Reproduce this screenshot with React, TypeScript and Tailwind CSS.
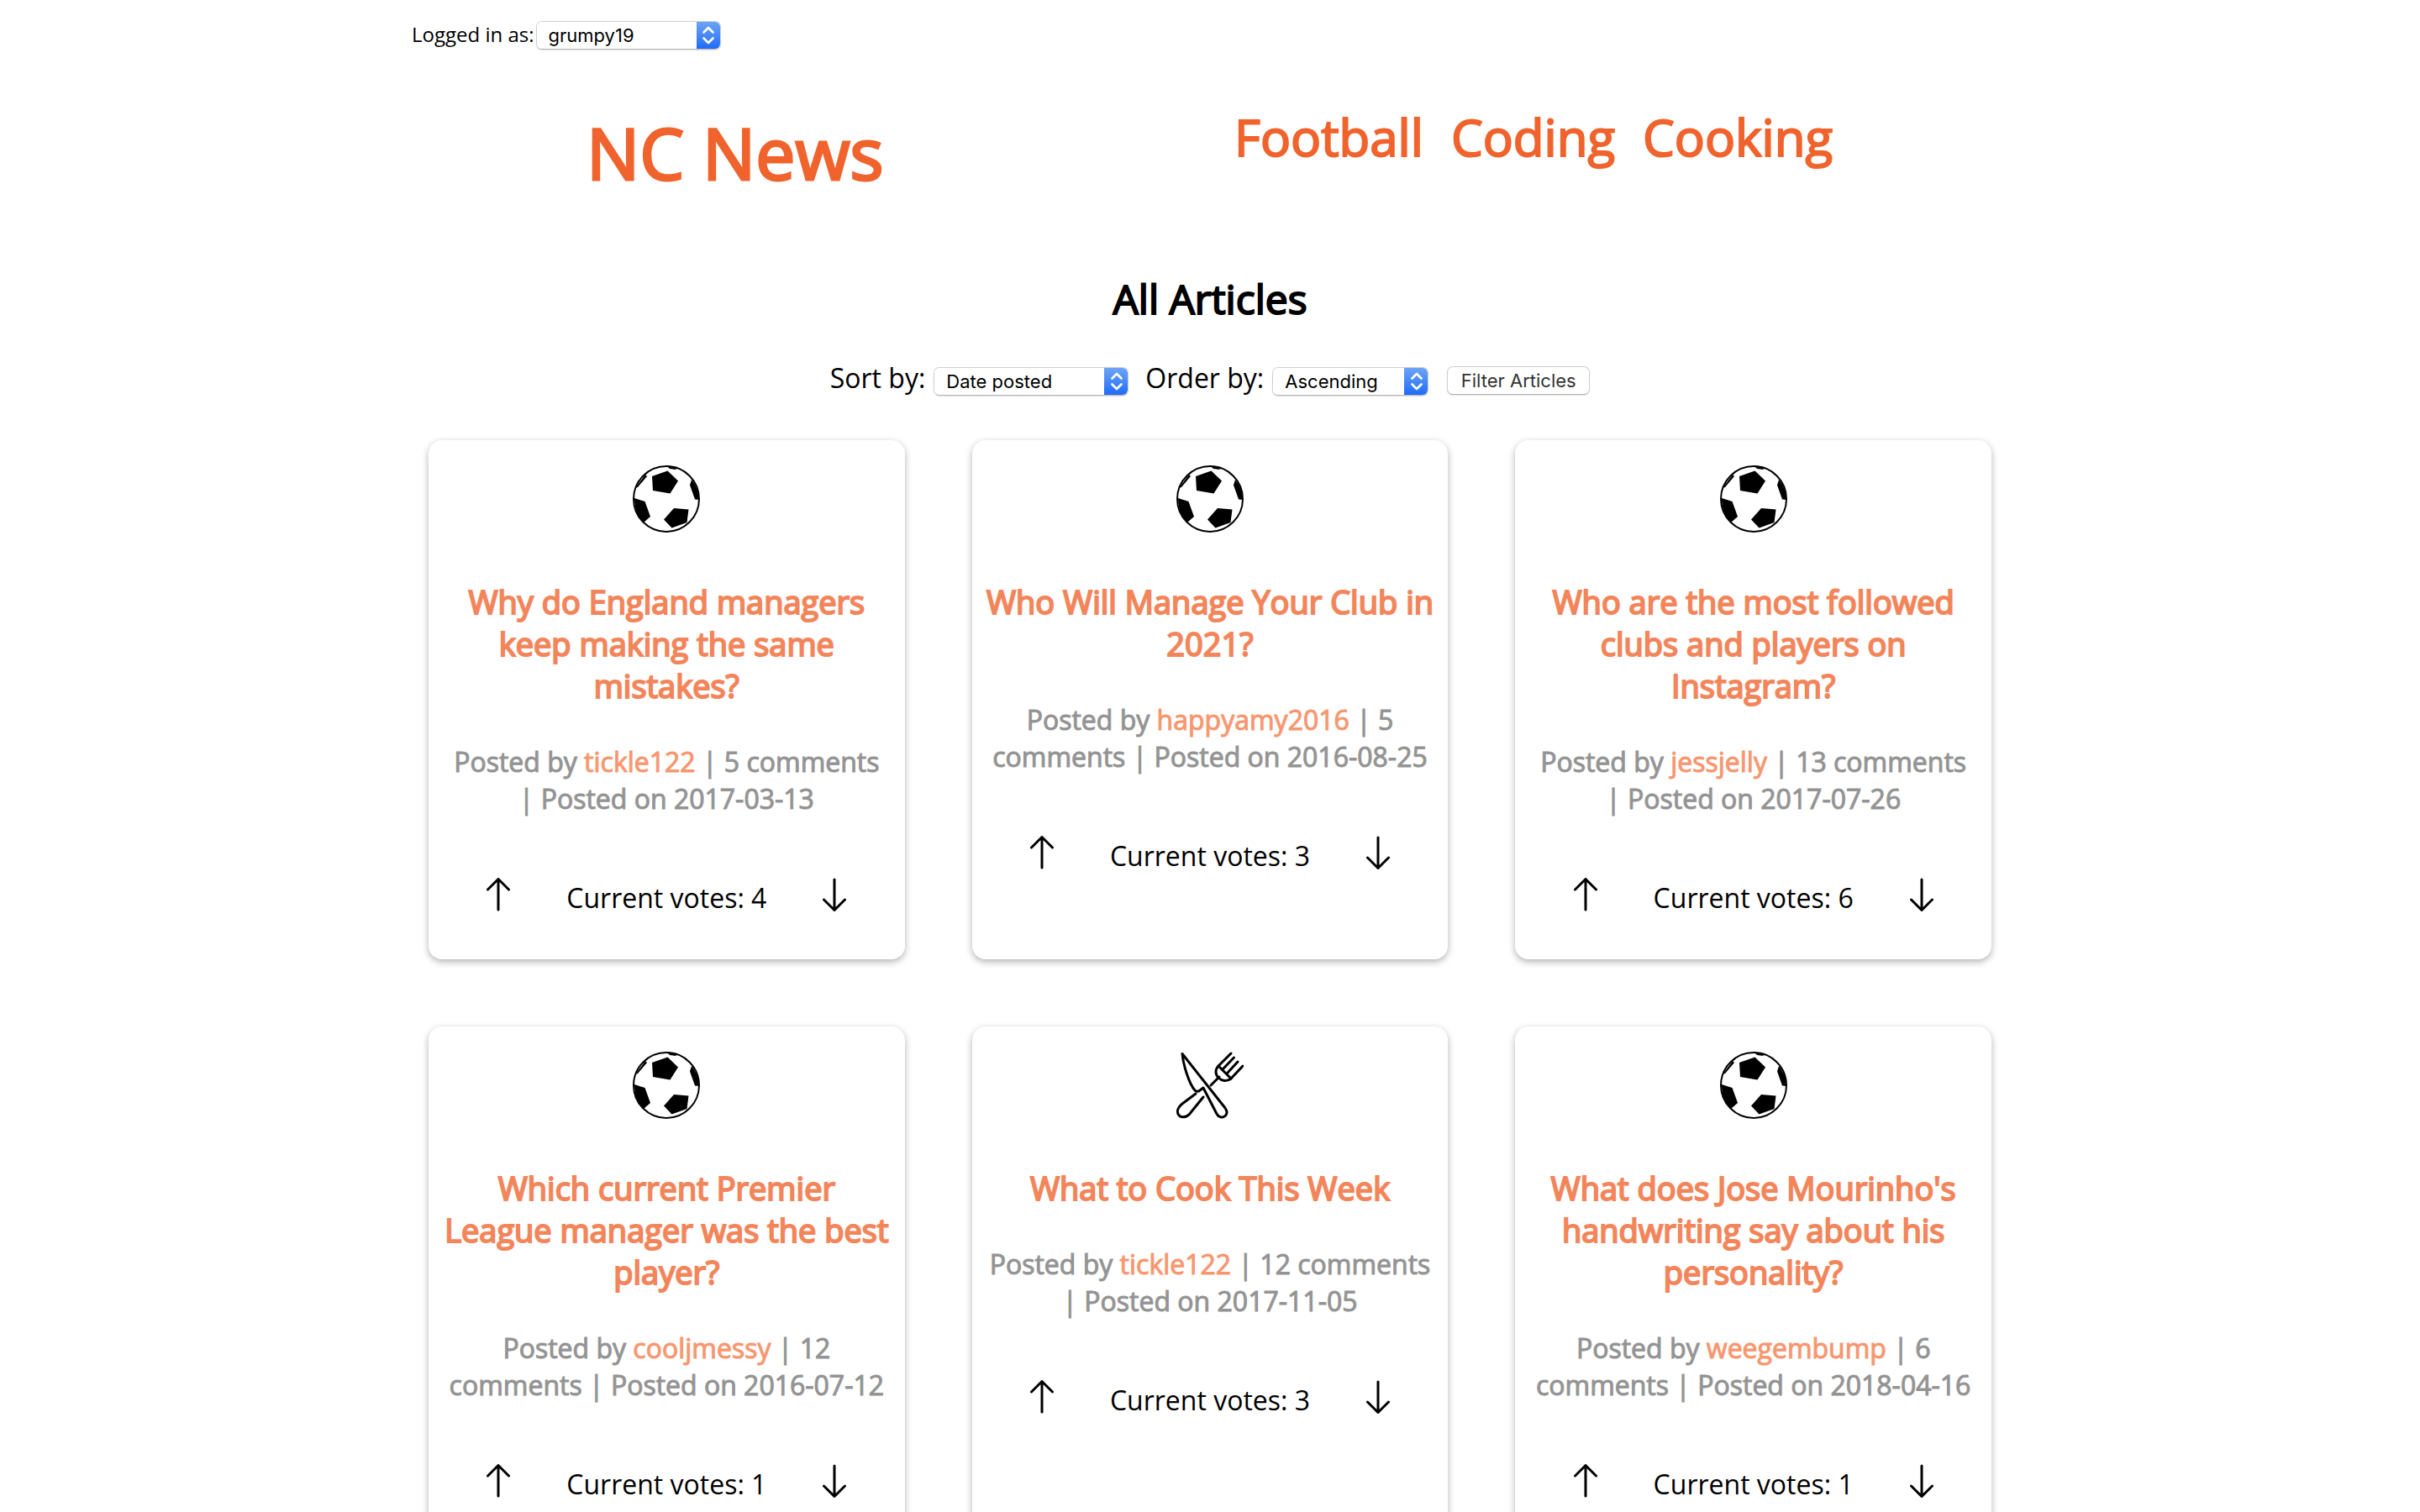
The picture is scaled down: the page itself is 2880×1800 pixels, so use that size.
import React, { useId } from "react";

type Topic = "football" | "cooking";

type Article = {
  title: string;
  topic: Topic;
  author: string;
  comments: number;
  date: string;
  votes: number;
};

const articles: Article[] = [
  { title: "Why do England managers keep making the same mistakes?", topic: "football", author: "tickle122", comments: 5, date: "2017-03-13", votes: 4 },
  { title: "Who Will Manage Your Club in 2021?", topic: "football", author: "happyamy2016", comments: 5, date: "2016-08-25", votes: 3 },
  { title: "Who are the most followed clubs and players on Instagram?", topic: "football", author: "jessjelly", comments: 13, date: "2017-07-26", votes: 6 },
  { title: "Which current Premier League manager was the best player?", topic: "football", author: "cooljmessy", comments: 12, date: "2016-07-12", votes: 1 },
  { title: "What to Cook This Week", topic: "cooking", author: "tickle122", comments: 12, date: "2017-11-05", votes: 3 },
  { title: "What does Jose Mourinho's handwriting say about his personality?", topic: "football", author: "weegembump", comments: 6, date: "2018-04-16", votes: 1 },
];

function FootballIcon() {
  return (
    <svg viewBox="0 0 80 80" className="size-20" aria-hidden="true">
      <circle cx="40" cy="40" r="39" fill="#fff" stroke="#000" strokeWidth="2" />
      <path d="M23 13 41.500 6.500 54 18.500 44.500 33.500 24 30Z" />
      <path d="M49 51 66.500 52.500 64.500 68 46.500 74.500 37 64.500Z" />
      <path d="M2 39 14.500 43 21 61 13 68C6 61 2 53 2 39Z" />
      <path d="M70 17C75 23 79 32 79 41L74 40.500 68 23.500Z" />
      <path d="M3 27 15 11 17 13 6 26Z" />
      <path d="M40 0 54 2 51 5 44 4Z" />
    </svg>
  );
}

function CutleryIcon() {
  return (
    <svg viewBox="0 0 80 80" className="size-20" fill="none" stroke="#000" strokeWidth="3" strokeLinecap="round" strokeLinejoin="round" aria-hidden="true">
      <path d="M7 2.500C8 15 15 38 22 46Q25 48.500 28 46L32 43 48 74C50 78 55 79.500 58 76.500 61 74 60 70 58 67L7 2.500Z" />
      <path d="M23 50 7 62C2 66 0 71 2.500 75 5 79 11 78.500 15 75L32 54" />
      <path d="M41 40 51 30" />
      <path d="M65 2 50 17C46 21 46 27 50 31 54 35 60 36 65 32L79 17" />
      <path d="M68.500 7 56 20M73 12 61 25M50 17 65 32" />
    </svg>
  );
}

function Arrow({ down = false }: { down?: boolean }) {
  return (
    <svg viewBox="0 0 28 40" className="h-10 w-7" fill="none" stroke="#000" strokeWidth="3" strokeLinecap="round" strokeLinejoin="round" aria-hidden="true">
      <path d={down ? "M14 2V38M1.500 26 14 38.500 26.500 26" : "M14 38V2M1.500 14 14 1.500 26.500 14"} />
    </svg>
  );
}

function SelectBox({ id, value, options, width }: { id: string; value: string; options: string[]; width: string }) {
  return (
    <div className={`relative flex h-[34px] overflow-hidden rounded-[7px] border border-[#cfcfcf] border-b-[#b5b5b5] shadow-[0_1px_1px_rgba(0,0,0,0.12)] ${width}`}>
      <select
        id={id}
        defaultValue={value}
        className="w-full appearance-none bg-white pl-3.5 font-['Inter','Liberation_Sans',sans-serif] text-[22px] leading-8 text-black outline-none"
      >
        {options.map((option) => (
          <option key={option}>{option}</option>
        ))}
      </select>
      <span className="pointer-events-none absolute -inset-y-px -right-px flex w-[29px] items-center justify-center bg-linear-to-b from-[#6fa5f6] to-[#1a69f8]">
        <svg viewBox="0 0 14 22" className="h-[22px] w-3.5" fill="none" stroke="#fff" strokeWidth="2.600" strokeLinecap="round" strokeLinejoin="round" aria-hidden="true">
          <path d="M1.500 7.500 7 2 12.500 7.500M1.500 14.500 7 20 12.500 14.500" />
        </svg>
      </span>
    </div>
  );
}

function ArticleCard({ article }: { article: Article }) {
  return (
    <article className="flex flex-col items-center rounded-2xl bg-white px-4 pt-[30px] pb-[51px] text-center shadow-[0_3px_8px_rgba(0,0,0,0.3)]">
      {article.topic === "football" ? <FootballIcon /> : <CutleryIcon />}
      <h3 className="mt-[57px] text-[38px] leading-[50px] text-[#f3855b] [-webkit-text-stroke:2px_#f3855b]">
        <a href="#article">{article.title}</a>
      </h3>
      <h4 className="mt-11 px-1 text-[32px] leading-[44px] text-[#949494] [-webkit-text-stroke:1px_#949494]">
        Posted by{" "}
        <a href="#author" className="text-[#f79770] [-webkit-text-stroke:1px_#f79770]">
          {article.author}
        </a>
        {` | ${article.comments} comments | Posted on ${article.date}`}
      </h4>
      <div className="mt-[72px] flex w-[428px] items-start justify-between">
        <button type="button" aria-label="Vote up" className="flex">
          <Arrow />
        </button>
        <p className="mt-0.5 text-[32px] leading-[44px] text-black">{`Current votes: ${article.votes}`}</p>
        <button type="button" aria-label="Vote down" className="flex">
          <Arrow down />
        </button>
      </div>
    </article>
  );
}

export default function App() {
  const userId = useId();
  const sortId = useId();
  const orderId = useId();

  return (
    <div className="min-h-screen bg-white font-['Open_Sans','Noto_Sans',sans-serif] text-black">
      <div className="mx-auto w-2/3">
        <div className="flex items-start pt-[25px] pl-2.5">
          <label htmlFor={userId} className="text-2xl leading-8">
            Logged in as:
          </label>
          <SelectBox id={userId} value="grumpy19" options={["grumpy19", "tickle122", "jessjelly"]} width="ml-0.5 w-[220px]" />
        </div>

        <header className="grid grid-cols-2 text-[#f0632d]">
          <h1 className="mt-[66px] ml-[218px] text-[84px] leading-[114px] [-webkit-text-stroke:3px_#f0632d]">
            <a href="#home">NC News</a>
          </h1>
          <nav className="mt-[63px] ml-[29px] flex gap-[33px] text-[60px] leading-[82px] [-webkit-text-stroke:2px_#f0632d]">
            <a href="#football">Football</a>
            <a href="#coding">Coding</a>
            <a href="#cooking">Cooking</a>
          </nav>
        </header>

        <main>
          <h2 className="mt-[84px] text-center text-5xl leading-[66px] [-webkit-text-stroke:2px_#000]">All Articles</h2>

          <form className="mt-[39px] flex items-center justify-center text-[32px] leading-[44px]" onSubmit={(event) => event.preventDefault()}>
            <label htmlFor={sortId}>Sort by:</label>
            <SelectBox id={sortId} value="Date posted" options={["Date posted", "Comments", "Votes"]} width="ml-2.5 mt-2 w-[232px]" />
            <label htmlFor={orderId} className="ml-5">
              Order by:
            </label>
            <SelectBox id={orderId} value="Ascending" options={["Ascending", "Descending"]} width="ml-2.5 mt-2 w-[186px]" />
            <button
              type="submit"
              className="mt-1.5 ml-[22px] h-[34px] w-[170px] rounded-[7px] border border-[#cfcfcf] border-b-[#b5b5b5] bg-white text-center font-['Inter','Liberation_Sans',sans-serif] text-[22px] leading-8 whitespace-nowrap text-[#333] shadow-[0_1px_1px_rgba(0,0,0,0.12)]"
            >
              Filter Articles
            </button>
          </form>

          <section aria-label="Articles" className="mt-[52px] grid grid-cols-3 gap-20 px-[30px] pb-20">
            {articles.map((article) => (
              <ArticleCard key={article.title} article={article} />
            ))}
          </section>
        </main>
      </div>
    </div>
  );
}
